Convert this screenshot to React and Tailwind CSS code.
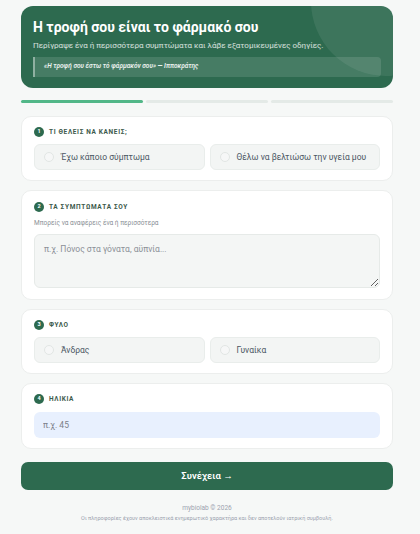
const options1 = ['Έχω κάποιο σύμπτωμα', 'Θέλω να βελτιώσω την υγεία μου']
const options3 = ['Άνδρας', 'Γυναίκα']

function StepLabel({ n, children }) {
  return (
    <div className="flex items-center gap-[5px] h-[10px]">
      <span className="flex items-center justify-center w-[10px] h-[10px] rounded-full bg-[#2d6a4f] text-white text-[5.5px] font-bold leading-none">
        {n}
      </span>
      <span className="text-[6.5px] font-bold tracking-[0.1em] text-[#3d5a4c] leading-none">{children}</span>
    </div>
  )
}

function Option({ label }) {
  return (
    <div className="flex-1 flex items-center gap-[7px] h-[26px] px-[9px] rounded-[6px] bg-[#f3f5f4] border border-[#e9edeb]">
      <span className="w-[10px] h-[10px] rounded-full border border-[#e2e6e4] bg-[#f6f7f7]" />
      <span className="text-[8.5px] text-[#4b5563]">{label}</span>
    </div>
  )
}

function Card({ children, className = '' }) {
  return (
    <div className={`bg-white rounded-[10px] border border-[#eceeed] px-[12px] ${className}`}>
      {children}
    </div>
  )
}

export default function App() {
  return (
    <div
      className="min-h-[534px] bg-[#f6f8f7] pl-[21px] pr-[27px] pt-[6px] pb-[8px]"
      style={{ fontFamily: 'Roboto, "Noto Sans", sans-serif' }}
    >
      <div className="relative overflow-hidden rounded-[12px] bg-[#2d6a4f] px-[12px] pt-[12px] pb-[11px]">
        <div className="absolute -right-[68px] -top-[80px] w-[150px] h-[150px] rounded-full bg-white/[0.08]" />
        <h1 className="relative text-[14px] font-bold text-white leading-[18px]">Η τροφή σου είναι το φάρμακό σου</h1>
        <p className="relative mt-[4px] text-[8px] text-white/80 leading-[11px]">
          Περίγραψε ένα ή περισσότερα συμπτώματα και λάβε εξατομικευμένες οδηγίες.
        </p>
        <div className="relative mt-[6px] h-[20px] flex items-center border-l-2 border-white/40 bg-white/[0.12] rounded-r-[4px] pl-[9px]">
          <span className="text-[6.5px] italic font-semibold text-white/90">
            «Η τροφή σου έστω τό φάρμακόν σου» — Ιπποκράτης
          </span>
        </div>
      </div>

      <div className="flex gap-[3px] mt-[12px]">
        <div className="flex-1 h-[3px] rounded-full bg-[#52b788]" />
        <div className="flex-1 h-[3px] rounded-full bg-[#e4eae7]" />
        <div className="flex-1 h-[3px] rounded-full bg-[#e4eae7]" />
      </div>

      <div className="flex flex-col gap-[9px] mt-[13px]">
        <Card className="pt-[10px] pb-[10px]">
          <StepLabel n="1">ΤΙ ΘΕΛΕΙΣ ΝΑ ΚΑΝΕΙΣ;</StepLabel>
          <div className="flex gap-[5px] mt-[7px]">
            {options1.map((o) => (
              <Option key={o} label={o} />
            ))}
          </div>
        </Card>

        <Card className="pt-[11px] pb-[11px]">
          <StepLabel n="2">ΤΑ ΣΥΜΠΤΩΜΑΤΑ ΣΟΥ</StepLabel>
          <p className="mt-[7px] text-[6.5px] text-[#8a8f96] leading-[9px]">Μπορείς να αναφέρεις ένα ή περισσότερα</p>
          <textarea
            placeholder="π.χ. Πόνος στα γόνατα, αϋπνία..."
            className="block mt-[6px] w-full h-[54px] rounded-[6px] bg-[#f4f6f5] border border-[#e6eae8] px-[9px] py-[8px] text-[8.5px] text-[#374151] placeholder:text-[#8b9097] outline-none"
          />
        </Card>

        <Card className="pt-[10px] pb-[10px]">
          <StepLabel n="3">ΦΥΛΟ</StepLabel>
          <div className="flex gap-[5px] mt-[7px]">
            {options3.map((o) => (
              <Option key={o} label={o} />
            ))}
          </div>
        </Card>

        <Card className="pt-[10px] pb-[10px]">
          <StepLabel n="4">ΗΛΙΚΙΑ</StepLabel>
          <input
            placeholder="π.χ. 45"
            className="block mt-[8px] w-full h-[26px] rounded-[6px] bg-[#e8f0fe] px-[9px] text-[8.5px] placeholder:text-[#7b8088] outline-none"
          />
        </Card>
      </div>

      <button
        type="button"
        className="mt-[13px] w-full h-[28px] rounded-[7px] bg-[#2d6a4f] text-white text-[9.5px] font-semibold"
      >
        Συνέχεια →
      </button>

      <div className="mt-[13px] text-center text-[#9ca3af]">
        <p className="text-[6.5px] leading-[10px]">mybiolab © 2026</p>
        <p className="mt-[1px] text-[5.5px] leading-[9px]">
          Οι πληροφορίες έχουν αποκλειστικά ενημερωτικό χαρακτήρα και δεν αποτελούν ιατρική συμβουλή.
        </p>
      </div>
    </div>
  )
}
